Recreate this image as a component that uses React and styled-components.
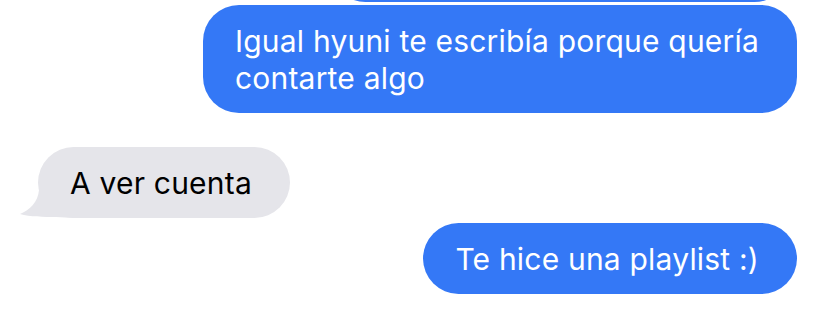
import React from 'react';
import styled, { createGlobalStyle } from 'styled-components';

const blue = '#3478f6';
const gray = '#e5e5ea';

const GlobalStyle = createGlobalStyle`
  html, body {
    margin: 0;
    background: #ffffff;
    font-family: Inter, 'Open Sans', sans-serif;
  }
  #root {
    height: 313px;
    overflow: hidden;
  }
`;

const Thread = styled.main`
  display: flex;
  flex-direction: column;
  padding: 0 30px 0 38px;
  margin-top: -69px;
`;

const Row = styled.div`
  display: flex;
  justify-content: ${ p => p.$mine ? 'flex-end' : 'flex-start' };
  margin-top: ${ p => p.$gap || 0 }px;
`;

const Bubble = styled.div`
  position: relative;
  box-sizing: border-box;
  max-width: 600px;
  min-height: 71px;
  padding: 18px 38px 16px 32px;
  border-radius: 36px;
  background: ${ p => p.$mine ? blue : gray };
  color: ${ p => p.$mine ? '#ffffff' : '#000000' };
  font-size: 30px;
  line-height: 37px;
  letter-spacing: 0.2px;
`;

const Text = styled.span`
  position: relative;
`;

const Tail = styled.svg`
  position: absolute;
  left: -20px;
  bottom: 0;
  width: 56px;
  height: 40px;
`;

const Message = ({ mine, gap, tail, children }) => (
  <Row $mine={ mine } $gap={ gap }>
    <Bubble $mine={ mine }>
      { tail && (
        <Tail viewBox='0 0 56 40'>
          <path
            d='M24 0 L21 12 C20 24 12 32 2 36 C12 39 26 39 38 39 L56 40 L56 0 Z'
            fill={ gray }
          />
        </Tail>
      ) }
      <Text>{ children }</Text>
    </Bubble>
  </Row>
);

export default function App() {
  return (
    <>
      <GlobalStyle />
      <Thread>
        <Row $mine $gap={ 0 }>
          <Bubble $mine style={{ width: 460, marginRight: 7 }} aria-hidden='true' />
        </Row>
        <Message mine gap={ 3 }>
          Igual hyuni te escribía porque quería<br />contarte algo
        </Message>
        <Message gap={ 34 } tail>
          A ver cuenta
        </Message>
        <Message mine gap={ 5 }>
          Te hice una playlist :)
        </Message>
      </Thread>
    </>
  );
}
